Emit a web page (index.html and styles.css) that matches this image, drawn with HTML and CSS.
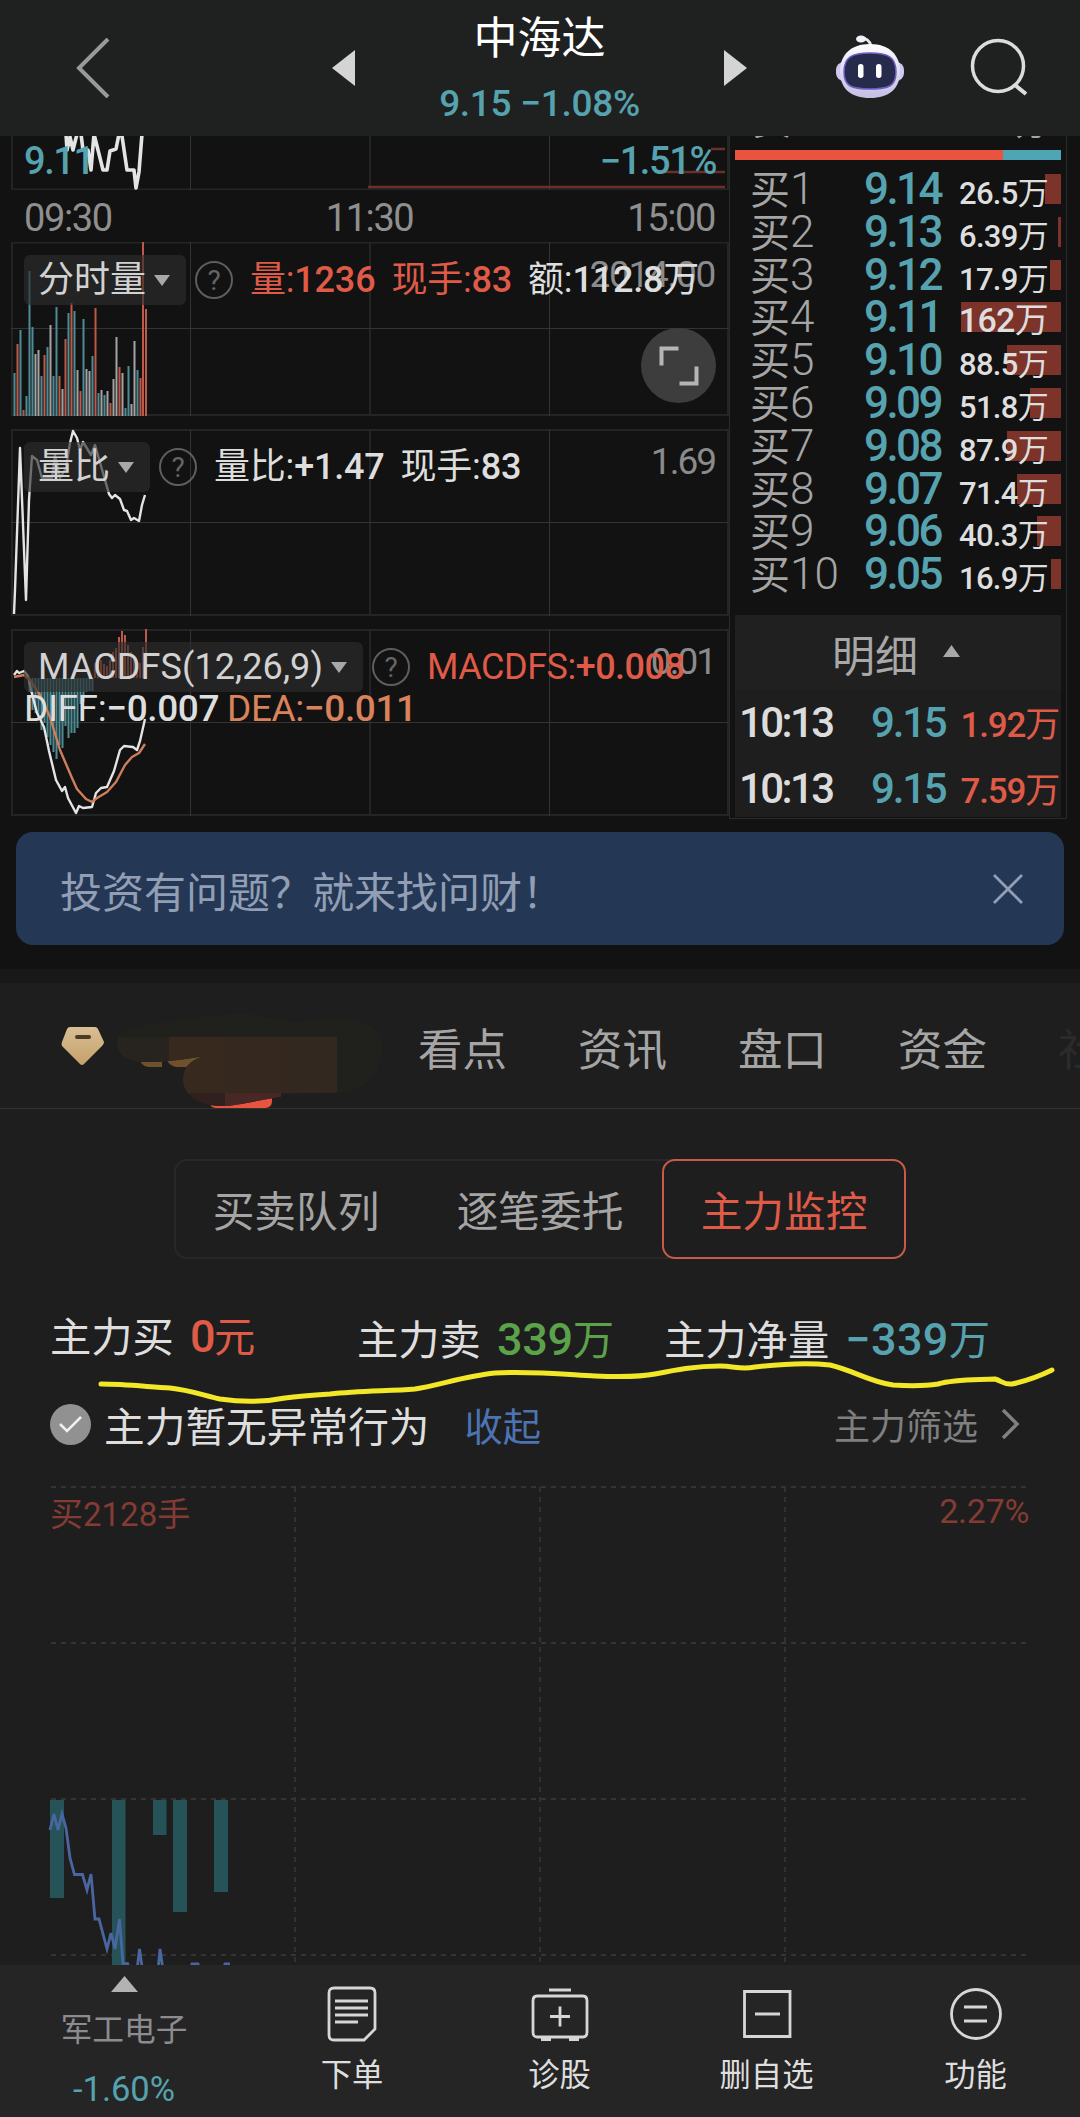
FILE: index.html
```html
<!DOCTYPE html>
<html lang="zh-CN">
<head>
    <meta charset="UTF-8">
    <title>中海达</title>
    <link rel="stylesheet" href="styles.css">
</head>
<body>

    <header class="header">
        <svg class="back" width="34" height="60" viewBox="0 0 34 60"><path d="M32 1L3 30L32 59" fill="none" stroke="#999" stroke-width="4"/></svg>
        <div class="switcher">
            <svg width="23" height="36" viewBox="0 0 23 36"><path d="M23 0V36L0 18Z" fill="#d4d4d4"/></svg>
            <div class="stock">
                <h1>中海达</h1>
                <div class="stock-price">9.15 −1.08%</div>
            </div>
            <svg width="23" height="36" viewBox="0 0 23 36"><path d="M0 0V36L23 18Z" fill="#d4d4d4"/></svg>
        </div>
        <svg class="robot" width="68" height="64" viewBox="0 0 68 64">
            <defs>
                <linearGradient id="shell" x1="0" y1="0" x2="0" y2="1">
                    <stop offset="0" stop-color="#fff"/>
                    <stop offset="0.6" stop-color="#d9d4ee"/>
                    <stop offset="1" stop-color="#c3bfe6"/>
                </linearGradient>
            </defs>
            <path d="M35 11C34 6 30 3 25 3" fill="none" stroke="#e8e6f2" stroke-width="3"/>
            <ellipse cx="25" cy="4" rx="5" ry="3.500" fill="#f2f1f8"/>
            <rect x="0" y="27" width="68" height="19" rx="8" fill="#cfc9f0"/>
            <path d="M34 9C53 9 64 20 64 36C64 54 53 63 34 63C15 63 4 54 4 36C4 20 15 9 34 9Z" fill="url(#shell)"/>
            <path d="M34 18C52 18 60 22 60 37C60 51 53 54 34 54C15 54 8 51 8 37C8 22 16 18 34 18Z" fill="#272b4b" stroke="#6f5fc4" stroke-width="1.500"/>
            <rect x="22" y="29" width="5.500" height="14" rx="2.700" fill="#fff"/>
            <rect x="40" y="29" width="5.500" height="14" rx="2.700" fill="#fff"/>
        </svg>
        <svg class="search" width="60" height="60" viewBox="0 0 60 60"><circle cx="28" cy="28" r="25.500" fill="none" stroke="#dcdcdc" stroke-width="3.500"/><path d="M45 47L56 56" stroke="#dcdcdc" stroke-width="4"/></svg>
    </header>

    <section class="market">
        <div class="charts">
            <!-- 分时 -->
            <div class="panel">
                <svg width="718" height="54" viewBox="11 136 718 54">
                    <path class="grid-thick" d="M12 136V190M370 136V190M728 136V190M11 189.500H729"/>
                    <path class="grid-thin" d="M190.500 136V190M549.500 136V190"/>
                    <path d="M368 187H725M665 172H725M711 149H725" stroke="#6b3029" stroke-width="2.500"/>
                    <path class="line-white" stroke-width="4" d="M66 134L67 150L70 137L73 150L77 134L81 134L83 150L88 150L91 170L94 134L98 150L103 170L107 170L110 151L116 149L119 134L122 136L127 170L134 170L136 188L139 172L142 134"/>
                </svg>
                <div class="panel-text limits"><span>9.11</span><span class="pct">−1.51%</span></div>
            </div>
            <div class="times"><span>09:30</span><span>11:30</span><span>15:00</span></div>

            <!-- 分时量 -->
            <div class="panel">
                <svg width="718" height="174" viewBox="11 242 718 174">
                    <path class="grid-thick" d="M12 241V416M370 241V416M728 241V416M11 242.500H729M11 415H729"/>
                    <path class="grid-thin" d="M190.500 242V416M549.500 242V416M11 328.500H729"/>
                    <path class="bar-teal" d="M14.500 373V416M20.500 330V416M26.500 396V416M29.500 271V416M32.500 327V416M41.500 376V416M47.500 347V416M53.500 376V416M56.500 307V416M68.500 313V416M74.500 311V416M83.500 319V416M92.500 356V416M98.500 393V416M104.500 395V416M125.500 408V416M128.500 366V416M137.500 370V416"/>
                    <path class="bar-white" d="M35.500 354V416M38.500 350V416M50.500 325V416M62.500 389V416M77.500 370V416M86.500 369V416M89.500 371V416M101.500 390V416M107.500 391V416M113.500 379V416M116.500 337V416M122.500 373V416M131.500 404V416M134.500 341V416"/>
                    <path class="bar-red" d="M17.500 344V416M23.500 410V416M44.500 355V416M59.500 376V416M65.500 339V416M71.500 303V416M80.500 391V416M95.500 308V416M110.500 403V416M119.500 367V416M140.500 378V416M143 241V416M146 309V416"/>
                </svg>
                <div class="panel-text axis"><span>2014.00</span></div>
                <div class="panel-text head">
                    <span class="tag">分时量<i class="caret"></i></span><span class="help">?</span>
                    <span class="value red">量:<b>1236</b></span><span class="value red">现手:<b>83</b></span><span class="value">额:<b>112.8</b>万</span>
                </div>
                <div class="expand">
                    <svg width="40" height="40" viewBox="0 0 40 40"><path d="M2.500 19.500V2.500H19.500M37.500 20.500V37.500H20.500" fill="none" stroke="#b5b5b5" stroke-width="4"/></svg>
                </div>
            </div>

            <!-- 量比 -->
            <div class="panel">
                <svg width="718" height="187" viewBox="11 429 718 187">
                    <path class="grid-thick" d="M12 429V616M370 429V616M728 429V616M11 430H729M11 615H729"/>
                    <path class="grid-thin" d="M190.500 430V616M549.500 430V616M11 522.500H729"/>
                    <path class="line-white" d="M14 614L15 590L20 448L26 600L29 500L32 456L37 460L42 478L52 478L55 455L60 478L66 468L70 443L73 431L77 438L80 450L83 442L91 455L95 445L101 466L109 494L112 498L115 495L120 499L124 510L127 511L131 520L134 518L139 521L142 505L145 495"/>
                </svg>
                <div class="panel-text axis short"><span>1.69</span></div>
                <div class="panel-text head">
                    <span class="tag">量比<i class="caret"></i></span><span class="help">?</span>
                    <span class="value">量比:<b>+1.47</b></span><span class="value">现手:<b>83</b></span>
                </div>
            </div>

            <!-- MACD -->
            <div class="panel">
                <svg width="718" height="187" viewBox="11 629 718 187">
                    <path class="grid-thick" d="M12 629V816M370 629V816M728 629V816M11 630H729M11 815H729"/>
                    <path class="grid-thin" d="M190.500 630V816M549.500 630V816M11 722.500H729"/>
                    <path class="bar-teal" d="M29.500 678V692M32.500 678V710M35.500 678V713M38.500 678V718M41.500 678V730M44.500 678V723M47.500 678V737M50.500 678V745M53.500 678V752M56.500 678V759M59.500 678V745M62.500 678V748M65.500 678V726M68.500 678V738M71.500 678V733M74.500 678V733M77.500 678V728M80.500 678V704M83.500 678V702M86.500 678V692M89.500 678V691M92.500 678V691"/>
                    <path class="bar-red" d="M95 678V663M98 678V662M101 678V660M104 678V664M107 678V666M110 678V660M113 678V652M116 678V648M119 678V637M122 678V631M125 678V635M128 678V645M131 678V652M134 678V657M137 678V665M140 678V663M143 678V647M146 678V629"/>
                    <path class="line-white" d="M14 675L17 671L19 673L24 671L28 676L31 690L37 713L44 727L49 751L56 780L62 791L65 787L68 798L76 813L79 806L83 808L92 807L96 793L101 788L107 787L114 771L120 750L124 746L133 747L137 750L140 741L145 719"/>
                    <path class="line-orange" d="M14 677L24 675L30 680L40 695L50 717L60 750L72 778L77 789L86 799L92 802L97 798L107 792L116 782L125 765L132 757L139 753L145 744"/>
                </svg>
                <div class="panel-text axis short"><span>0.01</span></div>
                <div class="panel-text head">
                    <span class="tag macd">MACDFS(12,26,9)<i class="caret"></i></span><span class="help">?</span>
                    <span class="value red macd-value">MACDFS:<b>+0.008</b></span>
                </div>
                <div class="panel-text diff"><span>DIFF:<b>−0.007</b></span><span class="orange">DEA:<b>−0.011</b></span></div>
            </div>
        </div>

        <div class="book">
            <div class="cut-row"><span>卖</span><span class="unit">万</span></div>
            <div class="ratio"></div>
            <div class="orders">
                <div class="order"><i class="depth" style="width: 16px"></i><span class="side">买<b>1</b></span><span class="price">9.14</span><span class="vol"><b>26.5</b>万</span></div>
                <div class="order"><i class="depth" style="width: 3px"></i><span class="side">买<b>2</b></span><span class="price">9.13</span><span class="vol"><b>6.39</b>万</span></div>
                <div class="order"><i class="depth" style="width: 11px"></i><span class="side">买<b>3</b></span><span class="price">9.12</span><span class="vol"><b>17.9</b>万</span></div>
                <div class="order"><i class="depth" style="width: 100px"></i><span class="side">买<b>4</b></span><span class="price">9.11</span><span class="vol big"><b>162</b>万</span></div>
                <div class="order"><i class="depth" style="width: 54px"></i><span class="side">买<b>5</b></span><span class="price">9.10</span><span class="vol"><b>88.5</b>万</span></div>
                <div class="order"><i class="depth" style="width: 31px"></i><span class="side">买<b>6</b></span><span class="price">9.09</span><span class="vol"><b>51.8</b>万</span></div>
                <div class="order"><i class="depth" style="width: 54px"></i><span class="side">买<b>7</b></span><span class="price">9.08</span><span class="vol"><b>87.9</b>万</span></div>
                <div class="order"><i class="depth" style="width: 44px"></i><span class="side">买<b>8</b></span><span class="price">9.07</span><span class="vol"><b>71.4</b>万</span></div>
                <div class="order"><i class="depth" style="width: 24px"></i><span class="side">买<b>9</b></span><span class="price">9.06</span><span class="vol"><b>40.3</b>万</span></div>
                <div class="order"><i class="depth" style="width: 10px"></i><span class="side">买<b>10</b></span><span class="price">9.05</span><span class="vol"><b>16.9</b>万</span></div>
            </div>
            <div class="detail-title">明细<svg width="17" height="12" viewBox="0 0 17 12"><path d="M8.500 0L17 12H0Z" fill="#a8a8a8"/></svg></div>
            <div class="details">
                <div class="trade"><span class="time">10:13</span><span class="price">9.15</span><span class="amount"><b>1.92</b>万</span></div>
                <div class="trade"><span class="time">10:13</span><span class="price">9.15</span><span class="amount"><b>7.59</b>万</span></div>
            </div>
        </div>
    </section>

    <div class="banner">
        <span>投资有问题？就来找问财！</span>
        <svg width="30" height="30" viewBox="0 0 30 30"><path d="M1 1L29 29M29 1L1 29" stroke="#929eb3" stroke-width="2.800"/></svg>
    </div>

    <main class="content">
        <nav class="tabs">
            <svg class="vip" width="322" height="98" viewBox="61 1010 322 98">
                <defs>
                    <linearGradient id="gold" x1="0" y1="0" x2="0" y2="1">
                        <stop offset="0" stop-color="#d9bf94"/>
                        <stop offset="1" stop-color="#c5a06a"/>
                    </linearGradient>
                    <clipPath id="smear">
                        <path d="M117 1042C119 1028 140 1024 170 1022C200 1018 225 1011 250 1014C275 1018 285 1023 300 1022C335 1016 382 1016 382 1045C382 1075 370 1084 350 1092L300 1094C270 1097 240 1106 222 1106C200 1106 183 1096 183 1079C183 1066 192 1060 204 1056C180 1060 165 1062 145 1062C125 1062 117 1054 117 1042Z"/>
                    </clipPath>
                </defs>
                <path d="M70 1027H95Q97 1027 98 1029L104 1042Q104 1044 102 1046L84 1064Q82 1066 80 1064L62 1046Q61 1044 62 1042L67 1029Q68 1027 70 1027Z" fill="url(#gold)"/>
                <path d="M77 1037H89" stroke="#4c3b25" stroke-width="4" stroke-linecap="round"/>
                <path d="M139 1058H162V1067H148Q141 1066 139 1058ZM166 1058L206 1055L188 1067H176Q168 1065 166 1058Z" fill="#6f522b"/>
                <path d="M210 1104C230 1107 245 1098 272 1096V1101Q272 1108 265 1108H217Q211 1108 210 1104Z" fill="#e85440"/>
                <g clip-path="url(#smear)">
                    <rect x="110" y="1008" width="280" height="100" fill="#20201d"/>
                    <rect x="110" y="1037" width="59" height="30" fill="#27241f"/>
                    <rect x="169" y="1037" width="112" height="56" fill="#37291e"/>
                    <rect x="225" y="1037" width="56" height="56" fill="#35291f"/>
                    <rect x="281" y="1037" width="56" height="56" fill="#32281f"/>
                    <rect x="169" y="1093" width="56" height="15" fill="#30211f"/>
                    <rect x="225" y="1093" width="56" height="15" fill="#482724"/>
                </g>
            </svg>
            <a href="#kandian">看点</a>
            <a href="#zixun">资讯</a>
            <a href="#pankou">盘口</a>
            <a href="#zijin">资金</a>
            <a href="#more" class="fade">社区</a>
        </nav>

        <div class="segments">
            <div class="segment">买卖队列</div>
            <div class="segment">逐笔委托</div>
            <div class="segment active">主力监控</div>
        </div>

        <div class="stats">
            <div class="stat first">主力买<span class="red"><b>0</b>元</span></div>
            <div class="stat">主力卖<span class="green"><b>339</b>万</span></div>
            <div class="stat">主力净量<span class="teal"><b>−339</b>万</span></div>
            <svg class="mark" width="1010" height="50" viewBox="70 1355 1010 50"><path d="M101 1384C125 1384 150 1387 170 1388C190 1390 205 1396 220 1399C240 1402 265 1402 285 1398C300 1396 315 1395 330 1394C360 1391 390 1391 415 1389C440 1385 465 1376 495 1373C530 1371 560 1374 595 1376C620 1377 640 1377 655 1374C675 1370 695 1366 720 1366C735 1366 740 1370 755 1367C780 1364 805 1362 830 1365C855 1371 870 1382 893 1385C910 1386 925 1386 938 1384C955 1379 975 1380 995 1379C1002 1381 1004 1385 1012 1384C1030 1380 1042 1375 1052 1370" fill="none" stroke="#f2e827" stroke-width="5" stroke-linecap="round"/></svg>
        </div>

        <div class="notice">
            <svg width="41" height="41" viewBox="0 0 41 41"><circle cx="20.500" cy="20.500" r="20.500" fill="#919191"/><path d="M10 20L17 27L31 13" fill="none" stroke="#f0f0f0" stroke-width="2.500"/></svg>
            <span class="notice-text">主力暂无异常行为</span>
            <a href="#fold">收起</a>
            <span class="filter">主力筛选</span>
            <svg width="19" height="30" viewBox="0 0 19 30"><path d="M2 1L16 15L2 29" fill="none" stroke="#808080" stroke-width="3.500"/></svg>
        </div>

        <div class="monitor">
            <svg width="1080" height="480" viewBox="0 1485 1080 480">
                <path d="M51 1487H1026M51 1643H1026M51 1799H1026M51 1955H1026M295 1487V1965M540 1487V1965M785 1487V1965" stroke="#343434" stroke-width="1.800" stroke-dasharray="5 5"/>
                <path d="M50 1800h14v98h-14ZM112 1800h13.500v165h-13.500ZM153 1800h13.500v35h-13.500ZM173 1800h14v112h-14ZM214 1800h14v92h-14Z" fill="#255358"/>
                <path d="M50 1830L54 1814L58 1830L62 1814L66 1828L70 1858L74.500 1874.500H82.500L87 1890L91 1874L95 1919H99L107 1949L111 1933L115 1949L119.500 1919L123 1964L127.500 1963.500L130 1970L137 1970L139.500 1949L142.500 1970H158L160 1949L163 1970H190L192 1964H198L200 1970H223L225 1964H230" fill="none" stroke="#4a66a0" stroke-width="2.800"/>
            </svg>
            <div class="monitor-labels"><span>买2128手</span><span class="pct-max">2.27%</span></div>
        </div>
    </main>

    <footer class="toolbar">
        <div class="tool sector">
            <svg width="27" height="16" viewBox="0 0 27 16"><path d="M13.500 0L27 16H0Z" fill="#b3b3b3"/></svg>
            <span class="sector-name">军工电子</span>
            <span class="sector-pct">-1.60%</span>
        </div>
        <div class="tool">
            <svg width="54" height="56" viewBox="0 0 54 56"><path d="M9 2H45Q50 2 50 7V43L39 54H9Q4 54 4 49V7Q4 2 9 2Z"/><path d="M10 15H43M10 22H43M10 29H43M10 36H33"/></svg>
            下单
        </div>
        <div class="tool">
            <svg width="60" height="56" viewBox="0 0 60 56"><path d="M19 4H41M7 10H53Q57 10 57 15V46Q57 51 53 51H7Q3 51 3 46V15Q3 10 7 10ZM20 30.500H40M30 20.500V40.500"/><path d="M11 53H21M39 53H49" stroke-width="4"/></svg>
            诊股
        </div>
        <div class="tool">
            <svg width="54" height="56" viewBox="0 0 54 56"><path d="M4.500 5.500H50V50.500H4.500ZM15 28H40"/></svg>
            删自选
        </div>
        <div class="tool">
            <svg width="54" height="56" viewBox="0 0 54 56"><circle cx="27" cy="28" r="24.500"/><path d="M15 21H38M15 35H38"/></svg>
            功能
        </div>
    </footer>

</body>
</html>
```
FILE: styles.css
```css
* {
    box-sizing: border-box;
}
body {
    margin: 0;
    width: 1080px;
    height: 2117px;
    overflow: hidden;
    background-color: #121212;
    color: #dedede;
    font-family: Roboto, "Noto Sans CJK SC", sans-serif;
}
svg {
    display: block;
    flex: none;
}
a {
    color: inherit;
    text-decoration: none;
}
i {
    font-style: normal;
}
b {
    font-weight: 500;
}
.red {
    color: #df5b48;
}
.green {
    color: #5ba24b;
}
.teal {
    color: #56a2af;
}
.orange {
    color: #d9825b;
}

/* header */
.header {
    display: flex;
    align-items: center;
    height: 136px;
    background-color: #1f2120;
}
.back {
    margin-left: 76px;
}
.switcher {
    display: flex;
    justify-content: space-between;
    align-items: center;
    width: 415px;
    margin-left: 222px;
}
.stock {
    text-align: center;
    white-space: nowrap;
}
.stock h1 {
    margin: 0;
    font-size: 44px;
    font-weight: 400;
    line-height: 76px;
    color: #fff;
}
.stock-price {
    font-size: 37px;
    line-height: 56px;
    margin: -1px 0 3px;
    letter-spacing: -0.3px;
    font-weight: 500;
    color: #56a2af;
}
.robot {
    margin: -3px 0 0 89px;
}
.search {
    margin-left: 66px;
}

/* charts */
.market {
    display: flex;
    height: 696px;
}
.charts {
    width: 718px;
    margin-left: 11px;
}
.panel {
    display: grid;
    position: relative;
    margin-bottom: 13px;
}
.panel > svg, .panel-text {
    grid-area: 1 / 1;
}
.grid-thick {
    stroke: #242424;
    stroke-width: 2;
}
.grid-thin {
    stroke: #333;
    stroke-width: 1;
}
.line-white, .line-orange {
    fill: none;
    stroke: #e4e4e4;
    stroke-width: 2.4;
    stroke-linejoin: round;
}
.panel:first-child .line-white {
    stroke-width: 3.6;
}
.line-orange {
    stroke: #cf7e5c;
}
.bar-teal {
    stroke: #4e8c95;
    stroke-width: 2;
}
.bar-white {
    stroke: #a3a3a3;
    stroke-width: 2;
}
.bar-red {
    stroke: #bd5948;
    stroke-width: 2;
}
.limits {
    display: flex;
    justify-content: space-between;
    padding: 0 13px 0 13px;
    font-size: 38px;
    font-weight: 500;
    line-height: 50px;
    letter-spacing: -1.4px;
    color: #56a2af;
}
.panel:first-child {
    height: 54px;
    margin-bottom: 0;
}
.times {
    display: flex;
    justify-content: space-between;
    height: 52px;
    padding: 0 14px 0 13px;
    font-size: 38px;
    font-weight: 400;
    line-height: 57px;
    letter-spacing: -1.4px;
    color: #8f8f8f;
}
.axis {
    padding: 8px 14px 0 0;
    font-size: 37px;
    line-height: 50px;
    letter-spacing: -1.3px;
    text-align: right;
    color: #8b8b8b;
}
.axis.short {
    letter-spacing: -2px;
}
.head {
    display: flex;
    align-items: center;
    height: 50px;
    margin: 13px 0 0 13px;
    font-size: 36px;
    line-height: 52px;
    white-space: nowrap;
}
.tag {
    display: flex;
    align-items: center;
    height: 50px;
    padding: 0 16px 0 14px;
    border-radius: 6px;
    background-color: rgba(45, 45, 45, 0.65);
    color: #d2d2d2;
}
.tag.macd {
    letter-spacing: 0.1px;
}
.caret {
    margin-left: 8px;
    border: 8.5px solid transparent;
    border-top: 11px solid #a8a8a8;
    border-bottom: 0;
}
.help {
    width: 38px;
    height: 38px;
    margin: 0 17px 0 9px;
    border: 2px solid #5e5e5e;
    border-radius: 50%;
    font-size: 28px;
    line-height: 35px;
    text-align: center;
    color: #666;
}
.value {
    margin-right: 16px;
    letter-spacing: -0.2px;
}
.macd-value {
    letter-spacing: -0.5px;
}
.diff {
    display: flex;
    gap: 8px;
    padding: 55px 0 0 13px;
    font-size: 37px;
    line-height: 50px;
    letter-spacing: -0.4px;
}
.expand {
    position: absolute;
    right: 13px;
    bottom: 13px;
    display: flex;
    justify-content: center;
    align-items: center;
    width: 75px;
    height: 75px;
    border-radius: 50%;
    background-color: #3d3d3d;
}

/* order book */
.book {
    width: 338px;
    height: 683px;
    padding: 0 5px;
    border: 1px solid #2a2a2a;
    border-top: 0;
}
.cut-row {
    display: flex;
    justify-content: space-between;
    height: 14px;
    padding: 0 14px 0 17px;
    overflow: hidden;
    font-size: 39px;
    line-height: 0;
    color: #a5a5a5;
}
.cut-row span {
    margin-top: -15px;
}
.cut-row .unit {
    margin-top: -11px;
    font-size: 31px;
}
.ratio {
    height: 10px;
    background: linear-gradient(to right, #e85440 268px, #4ea6b4 268px);
}
.orders {
    height: 455px;
    padding-top: 8px;
}
.order {
    position: relative;
    display: flex;
    align-items: baseline;
    height: 42.8px;
    line-height: 43px;
}
.depth {
    position: absolute;
    right: 0;
    top: 6px;
    height: 30px;
    background-color: #7c3329;
}
.side {
    width: 129px;
    padding-left: 15px;
    font-size: 40px;
    color: #a5a5a5;
    white-space: nowrap;
}
.side b {
    font-size: 44px;
    font-weight: 300;
    letter-spacing: 0;
}
.price {
    font-size: 44px;
    font-weight: 500;
    letter-spacing: -2.6px;
    color: #56a2af;
}
.vol {
    position: relative;
    margin-left: auto;
    padding-right: 13px;
    font-size: 31px;
    letter-spacing: -0.7px;
}
.vol.big {
    font-size: 34px;
}
.detail-title {
    display: flex;
    justify-content: center;
    align-items: center;
    height: 75px;
    padding-right: 4px;
    background-color: #202020;
    font-size: 43px;
    color: #a8a8a8;
}
.detail-title svg {
    margin: -3px 0 0 25px;
}
.details {
    height: 127px;
    background-color: #1e1e1e;
}
.trade {
    display: flex;
    align-items: baseline;
    height: 66px;
    padding: 0 2px 0 4px;
    line-height: 65px;
    color: #dcdcdc;
}
.time {
    width: 132px;
    font-size: 42px;
    font-weight: 500;
    letter-spacing: -2.6px;
}
.trade .price {
    font-size: 42px;
    letter-spacing: -2.2px;
}
.amount {
    margin-left: auto;
    font-size: 35px;
    letter-spacing: -1.2px;
    color: #df5b48;
}

/* banner */
.banner {
    display: flex;
    justify-content: space-between;
    align-items: center;
    height: 113px;
    margin: 0 16px 24px;
    padding: 0 41px 0 44px;
    border-radius: 17px;
    background-color: #243856;
    font-size: 42px;
    color: #929eb3;
}
.banner span {
    padding-top: 2px;
}

/* content */
.content {
    height: 996px;
    border-top: 14px solid #181818;
    background-color: #1e1e1e;
    overflow: hidden;
}
.tabs {
    display: flex;
    align-items: flex-end;
    height: 126px;
    border-bottom: 1px solid #333;
    overflow: hidden;
}
.tabs a {
    flex: none;
    width: 160px;
    font-size: 44.5px;
    line-height: 114px;
    color: #a5a5a5;
}
.vip {
    margin: 0 35px 0 61px;
}
.tabs .fade {
    color: #2b2b2b;
}
.segments {
    display: flex;
    width: 732px;
    height: 100px;
    margin: 50px auto 0;
    border-radius: 13px;
    box-shadow: inset 0 0 0 2px #282828;
}
.segment {
    width: 244px;
    font-size: 41.7px;
    line-height: 108px;
    text-align: center;
    color: #a5a5a5;
}
.segment.active {
    border: 2px solid #c95a49;
    border-radius: 13px;
    line-height: 104px;
    color: #df5b48;
}
.stats {
    position: relative;
    display: grid;
    grid-template-columns: 307px 307px 1fr;
    height: 125px;
    padding: 44px 0 0 50px;
}
.stat {
    font-size: 41.3px;
    line-height: 74px;
    white-space: nowrap;
}
.stat.first {
    margin-top: -3px;
}
.stat span {
    margin-left: 16px;
}
.stat b {
    font-size: 45px;
    letter-spacing: -0.3px;
}
.stat.first b {
    letter-spacing: -1.5px;
}
.stat .teal b {
    letter-spacing: 0.4px;
}
.mark {
    position: absolute;
    left: 70px;
    top: 96px;
}
.notice {
    display: flex;
    align-items: center;
    height: 80px;
    padding: 0 60px 0 50px;
}
.notice-text {
    margin-left: 13px;
    font-size: 40.7px;
}
.notice a {
    margin-left: 35px;
    font-size: 38.3px;
    color: #4c74b5;
}
.filter {
    margin: 0 23px 0 auto;
    font-size: 36px;
    color: #7f7f7f;
}
.monitor {
    display: grid;
    margin-top: 21px;
}
.monitor > * {
    grid-area: 1 / 1;
}
.monitor-labels {
    display: flex;
    justify-content: space-between;
    padding: 0 51px 0 50px;
    font-size: 33px;
    line-height: 59px;
    color: #843b34;
}
.pct-max {
    font-size: 34px;
    line-height: 52px;
    letter-spacing: -0.3px;
}

/* bottom toolbar */
.toolbar {
    display: grid;
    grid-template-columns: 248px 208px 207px 207px 211px;
    height: 152px;
    background-color: #252525;
}
.tool {
    display: flex;
    flex-direction: column;
    align-items: center;
    padding-top: 21px;
    font-size: 31.3px;
    line-height: 67px;
}
.tool svg {
    fill: none;
    stroke: #d6d6d6;
    stroke-width: 2.8;
}
.sector {
    padding-top: 11px;
}
.sector svg {
    stroke: none;
}
.sector-name {
    line-height: 78px;
    font-size: 31.7px;
    color: #8c8c90;
}
.sector-pct {
    font-size: 34.5px;
    line-height: 38px;
    color: #56a2af;
}
```
